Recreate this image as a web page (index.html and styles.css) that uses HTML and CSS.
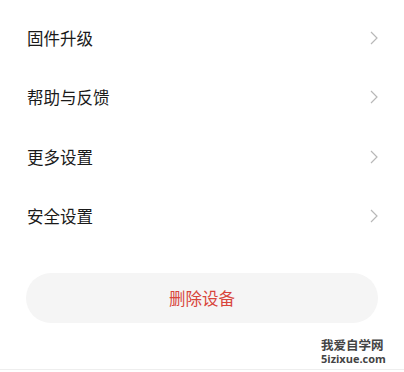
FILE: index.html
```html
<!DOCTYPE html>
<html lang="zh">
<head>
<meta charset="utf-8">
<link rel="stylesheet" href="styles.css">
</head>
<body>
<div class="page">
  <ul class="menu">
    <li class="row"><span class="label">固件升级</span><svg class="chev" width="8" height="14" viewBox="0 0 8 14"><path d="M1 1 L7 7 L1 13" fill="none" stroke="#b8b8b8" stroke-width="1.2"/></svg></li>
    <li class="row"><span class="label">帮助与反馈</span><svg class="chev" width="8" height="14" viewBox="0 0 8 14"><path d="M1 1 L7 7 L1 13" fill="none" stroke="#b8b8b8" stroke-width="1.2"/></svg></li>
    <li class="row"><span class="label">更多设置</span><svg class="chev" width="8" height="14" viewBox="0 0 8 14"><path d="M1 1 L7 7 L1 13" fill="none" stroke="#b8b8b8" stroke-width="1.2"/></svg></li>
    <li class="row"><span class="label">安全设置</span><svg class="chev" width="8" height="14" viewBox="0 0 8 14"><path d="M1 1 L7 7 L1 13" fill="none" stroke="#b8b8b8" stroke-width="1.2"/></svg></li>
  </ul>
  <div class="actions">
    <button class="delete">删除设备</button>
  </div>
  <div class="bottom-line"></div>
  <div class="watermark">
    <div class="wm-cn">我爱自学网</div>
    <div class="wm-en">5izixue.com</div>
  </div>
</div>
</body>
</html>
```
FILE: styles.css
```css
html, body {
  margin: 0;
  padding: 0;
  background: #ffffff;
}
.page {
  position: relative;
  width: 404px;
  height: 372px;
  overflow: hidden;
  font-family: "Noto Sans CJK SC", "Noto Sans", sans-serif;
}
.menu {
  list-style: none;
  margin: 0;
  padding: 8px 0 0 0;
}
.row {
  height: 59.5px;
  display: flex;
  align-items: center;
  justify-content: space-between;
  padding: 0 26px 0 27px;
}
.label {
  font-size: 16.5px;
  color: #1a1a1a;
  line-height: 1;
}
.chev {
  display: block;
}
.actions {
  padding: 27px 26px 0 26px;
}
.delete {
  display: block;
  width: 100%;
  height: 50px;
  border: none;
  border-radius: 25px;
  background: #f5f5f5;
  color: #d8463c;
  font-family: "Noto Sans CJK SC", "Noto Sans", sans-serif;
  font-size: 16.5px;
  padding: 0;
}
.bottom-line {
  position: absolute;
  left: 0;
  right: 0;
  top: 369px;
  height: 1px;
  background: #eeeeee;
}
.watermark {
  position: absolute;
  left: 321px;
  top: 337px;
  color: #444444;
  font-weight: bold;
}
.wm-cn {
  font-size: 12.5px;
  line-height: 15px;
}
.wm-en {
  font-family: "Open Sans", "DejaVu Sans", sans-serif;
  font-size: 11px;
  line-height: 13px;
}
```
